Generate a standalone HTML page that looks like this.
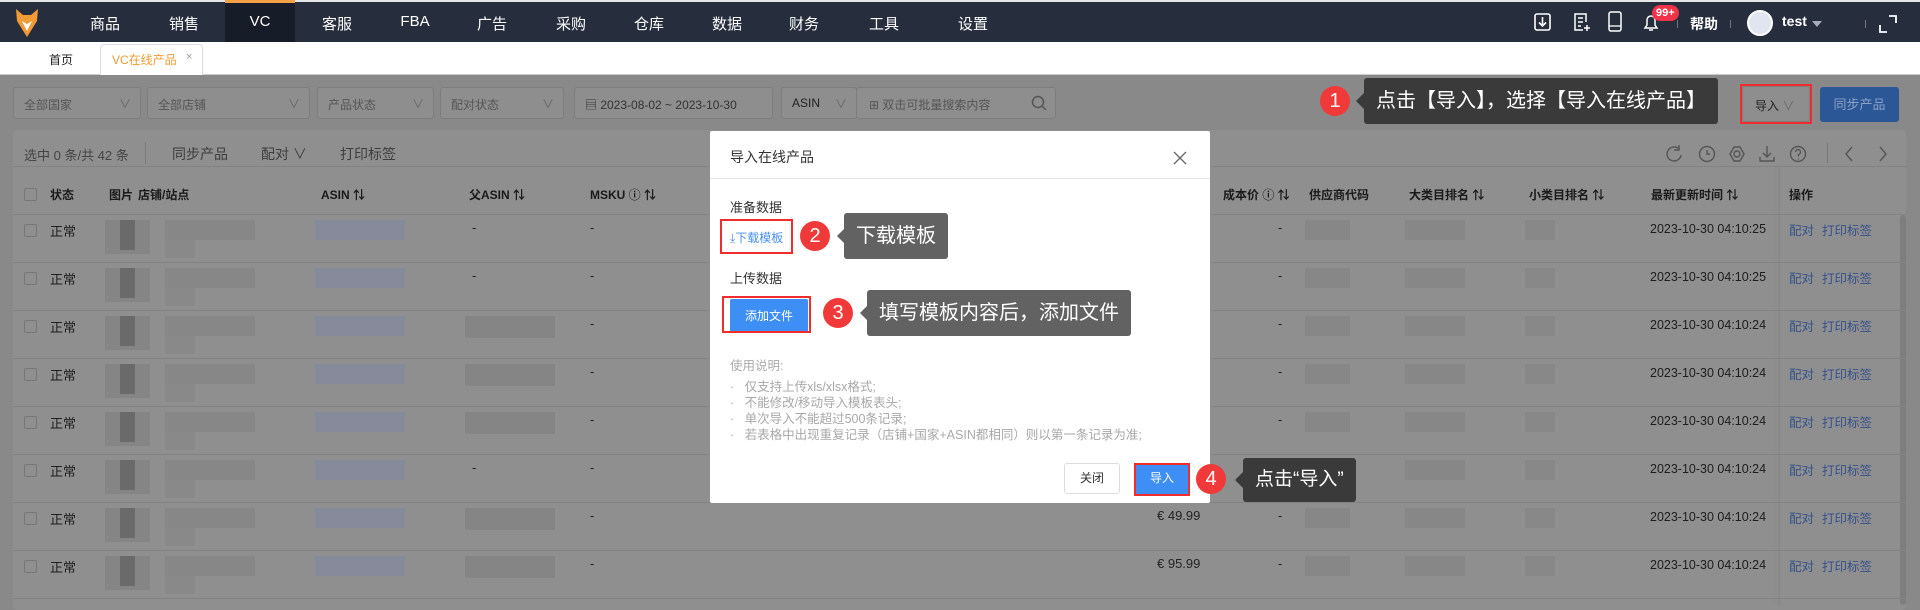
<!DOCTYPE html>
<html><head><meta charset="utf-8"><style>
*{margin:0;padding:0;box-sizing:border-box}
body{width:1920px;height:605px;overflow:hidden;position:relative;background:#898989;font-family:"Liberation Sans","Noto Sans CJK SC",sans-serif;font-size:13px;color:#222}
.a{position:absolute}
.nav{left:0;top:0;width:1920px;height:42px;background:#262e3e;border-top:2px solid #e6e6e6}
.ni{position:absolute;top:11px;color:#fff;font-size:15px;transform:translateX(-50%)}
.tabs{left:0;top:42px;width:1920px;height:33px;background:#fff;border-bottom:1px solid #ccc}
.inp{position:absolute;top:87px;height:32px;border:1px solid #7d7d7d;border-radius:3px;background:#8e8e8e;color:#555;font-size:12px;padding:8px 10px}
.inp i{position:absolute;right:9px;top:7px;font-style:normal;color:#666}
.card{left:13px;top:130px;width:1893px;height:480px;background:#8f8f8f;border-radius:4px}
.hl{position:absolute;left:13px;width:1893px;height:1px;background:#838383}
.th{position:absolute;top:186px;font-weight:bold;font-size:12px;color:#1a1a1a}
.cb{position:absolute;left:24px;width:13px;height:13px;border:1px solid #777;border-radius:2px}
.bl{position:absolute;background:#7d7d7d}
.dt{position:absolute;left:1650px;font-size:12.5px;color:#1d1d1d}
.op{position:absolute;color:#34528a;font-size:12.5px}
.modal{left:710px;top:131px;width:500px;height:372px;background:#fff;border-radius:2px}
.circ{position:absolute;width:30px;height:30px;border-radius:50%;background:#f03a3a;color:#fff;font-size:20px;text-align:center;line-height:30px}
.tip{position:absolute;color:#fff;font-size:20px;padding:0 12px;border-radius:3px;white-space:nowrap}
.rb{position:absolute;border:2px solid #f02c2c}
.li{position:absolute;left:730px;font-size:12.5px;color:#a8a8a8;white-space:nowrap}
</style></head><body>
<div class="a nav">
<svg class="a" style="left:16px;top:7px" width="22" height="28" viewBox="0 0 22 28"><path d="M0 0 L7 6 L15 6 L22 0 L21 12 L11 28 L1 12Z" fill="#f29a36"/><path d="M6 12 L11 22 L16 12 L11 15Z" fill="#fff"/></svg>
<div class="a" style="left:225px;top:-2px;width:70px;height:42px;background:#161c28;border-top:3px solid #f4a046"></div>
<span class="ni" style="left:105px">商品</span><span class="ni" style="left:184px">销售</span><span class="ni" style="left:260px">VC</span><span class="ni" style="left:337px">客服</span><span class="ni" style="left:415px">FBA</span><span class="ni" style="left:492px">广告</span><span class="ni" style="left:571px">采购</span><span class="ni" style="left:649px">仓库</span><span class="ni" style="left:727px">数据</span><span class="ni" style="left:804px">财务</span><span class="ni" style="left:884px">工具</span><span class="ni" style="left:973px">设置</span>
<svg class="a" style="left:1534px;top:10px" width="18" height="20"><rect x="1" y="2" width="15" height="16" rx="2" fill="none" stroke="#fff" stroke-width="1.6"/><path d="M8.5 5v9M5 10.5l3.5 3.5 3.5-3.5" fill="none" stroke="#fff" stroke-width="1.6"/></svg>
<svg class="a" style="left:1573px;top:10px" width="18" height="22"><path d="M13 10V2H2v16h8" fill="none" stroke="#fff" stroke-width="1.5"/><path d="M5 6h5M5 10h5M5 14h3M14 13v6M11 16h6" stroke="#fff" stroke-width="1.5"/></svg>
<svg class="a" style="left:1608px;top:9px" width="14" height="22"><rect x="1" y="1" width="12" height="19" rx="2" fill="none" stroke="#fff" stroke-width="1.5"/><path d="M1 15h12" stroke="#fff" stroke-width="1.3"/></svg>
<svg class="a" style="left:1643px;top:10px" width="16" height="22"><path d="M2 16h12l-2-3V8a4 4 0 0 0-8 0v5z" fill="none" stroke="#fff" stroke-width="1.5"/><path d="M6 18h4" stroke="#fff" stroke-width="1.5"/></svg>
<div class="a" style="left:1652px;top:3px;padding:0 4px;height:16px;border-radius:8px;background:#f0324a;color:#fff;font-size:11px;line-height:16px;font-weight:bold">99+</div>
<div class="a" style="left:1677px;top:18px;width:1px;height:8px;background:#777"></div>
<span class="a" style="left:1690px;top:12px;color:#fff;font-size:14px;font-weight:bold">帮助</span>
<div class="a" style="left:1730px;top:18px;width:1px;height:8px;background:#777"></div>
<div class="a" style="left:1747px;top:8px;width:26px;height:26px;border-radius:50%;background:#dfe6f0;border:2px solid #fff"></div>
<span class="a" style="left:1782px;top:11px;color:#fff;font-size:14px;font-weight:bold">test</span>
<div class="a" style="left:1812px;top:19px;border:5px solid transparent;border-top:6px solid #aab;border-bottom:0"></div>
<div class="a" style="left:1865px;top:18px;width:1px;height:8px;background:#777"></div>
<svg class="a" style="left:1879px;top:13px" width="18" height="18"><path d="M10 1h7v7M1 10v7h7" fill="none" stroke="#fff" stroke-width="1.8"/></svg>
</div>
<div class="a tabs">
<span class="a" style="left:49px;top:9px;font-size:12px;color:#222">首页</span>
<div class="a" style="left:100px;top:2px;width:103px;height:31px;border:1px solid #ddd;border-bottom:0;border-radius:4px 4px 0 0;background:#fff"></div>
<span class="a" style="left:112px;top:9px;font-size:12px;color:#f29a36">VC在线产品</span><span class="a" style="left:186px;top:9px;font-size:11px;color:#999">×</span>
</div>
<div class="inp" style="left:13px;width:128px">全部国家<i>∨</i></div>
<div class="inp" style="left:147px;width:163px">全部店铺<i>∨</i></div>
<div class="inp" style="left:317px;width:117px">产品状态<i>∨</i></div>
<div class="inp" style="left:440px;width:124px">配对状态<i>∨</i></div>
<div class="inp" style="left:574px;width:199px;padding-left:10px;color:#333">▤ 2023-08-02 ~ 2023-10-30</div>
<div class="inp" style="left:781px;width:76px;color:#222">ASIN<i>∨</i></div>
<div class="inp" style="left:856px;width:200px;padding-left:12px">⊞ 双击可批量搜索内容
<svg class="a" style="right:8px;top:7px" width="16" height="16"><circle cx="7" cy="7" r="5.5" fill="none" stroke="#555" stroke-width="1.5"/><path d="M11 11l4 4" stroke="#555" stroke-width="1.5"/></svg></div>
<div class="a" style="left:1356px;top:93px;border:8px solid transparent;border-left:0;border-right-color:#3a3a3a"></div>
<div class="tip" style="left:1364px;top:78px;height:46px;line-height:46px;background:#3a3a3a">点击【导入】，选择【导入在线产品】</div>
<div class="circ" style="left:1320px;top:86px">1</div>
<div class="a" style="left:1742px;top:86px;width:68px;height:36px;background:#8e8e8e;border:1px solid #7d7d7d;border-radius:3px;font-size:12px;padding:10px 12px">导入 <span style="color:#666">∨</span></div>
<div class="rb" style="left:1740px;top:84px;width:72px;height:40px"></div>
<div class="a" style="left:1820px;top:87px;width:79px;height:35px;background:#2b5797;border-radius:3px;color:#8aa2c6;font-size:13px;text-align:center;line-height:35px">同步产品</div>
<div class="a card"></div>
<span class="a" style="left:24px;top:145px;font-size:13px;color:#444">选中 0 条/共 42 条</span>
<div class="a" style="left:145px;top:142px;width:1px;height:22px;background:#7a7a7a"></div>
<span class="a" style="left:172px;top:144px;font-size:14px;color:#3d3d3d">同步产品</span>
<span class="a" style="left:261px;top:144px;font-size:14px;color:#3d3d3d">配对 ∨</span>
<span class="a" style="left:340px;top:144px;font-size:14px;color:#3d3d3d">打印标签</span>
<svg class="a" style="left:1664px;top:143px" width="150" height="22" fill="none" stroke="#555" stroke-width="1.4">
<path d="M15 6A7 7 0 1 0 17 12"/><path d="M15 2v5h-5"/>
<circle cx="43" cy="11" r="7.5"/><path d="M43 7v4h3"/>
<path d="M70 4h6l4 7-4 7h-6l-4-7z"/><circle cx="73" cy="11" r="3"/>
<path d="M103 3v11M99 10l4 4 4-4M96 14v4h14v-4"/>
<circle cx="134" cy="11" r="7.5"/><path d="M131.5 9a2.5 2.5 0 1 1 3 2.5v2M134.5 15.5v1"/>
</svg>
<div class="a" style="left:1827px;top:143px;width:1px;height:20px;background:#777"></div>
<svg class="a" style="left:1842px;top:145px" width="50" height="18" fill="none" stroke="#555" stroke-width="1.4"><path d="M10 2l-6 7 6 7M38 2l6 7-6 7"/></svg>
<div class="hl" style="top:166px"></div>
<div class="cb" style="top:188px"></div>
<span class="th" style="left:50px">状态</span><span class="th" style="left:109px">图片</span><span class="th" style="left:138px">店铺/站点</span><span class="th" style="left:321px">ASIN ⇅</span><span class="th" style="left:469px">父ASIN ⇅</span><span class="th" style="left:590px">MSKU ⓘ ⇅</span><span class="th" style="left:1223px">成本价 ⓘ ⇅</span><span class="th" style="left:1309px">供应商代码</span><span class="th" style="left:1409px">大类目排名 ⇅</span><span class="th" style="left:1529px">小类目排名 ⇅</span><span class="th" style="left:1651px">最新更新时间 ⇅</span><span class="th" style="left:1789px">操作</span>
<div class="a" style="left:1779px;top:166px;width:1px;height:440px;background:#878787;box-shadow:-3px 0 5px rgba(0,0,0,.08)"></div>
<div class="a" style="left:1900px;top:215px;width:6px;height:390px;background:#7e7e7e;border-radius:3px"></div>
<div class="hl" style="top:214px"></div><div class="hl" style="top:262px"></div><div class="hl" style="top:310px"></div><div class="hl" style="top:358px"></div><div class="hl" style="top:406px"></div><div class="hl" style="top:454px"></div><div class="hl" style="top:502px"></div><div class="hl" style="top:550px"></div><div class="hl" style="top:598px"></div>
<div id="rows"></div>
<script>
var tops=[214,262,310,358,406,454,502,550],h='';
var sec=['25','25','24','24','24','24','24','24'];
tops.forEach(function(t,i){
h+='<div class="cb" style="top:'+(t+10)+'px"></div>';
h+='<span class="a" style="left:50px;top:'+(t+7)+'px;font-size:13px;color:#1e1e1e">正常</span>';
h+='<div class="bl" style="left:105px;top:'+(t+6)+'px;width:45px;height:34px;background:#858585"></div>';
h+='<div class="bl" style="left:120px;top:'+(t+6)+'px;width:15px;height:30px;background:#6a6a6a"></div>';
h+='<div class="bl" style="left:165px;top:'+(t+6)+'px;width:90px;height:20px;background:#878787"></div>';
h+='<div class="bl" style="left:165px;top:'+(t+26)+'px;width:30px;height:18px;background:#898989"></div>';
h+='<div class="bl" style="left:315px;top:'+(t+6)+'px;width:90px;height:20px;background:#868a9a"></div>';
if(i==2||i==3||i==4||i==6||i==7)h+='<div class="bl" style="left:465px;top:'+(t+6)+'px;width:90px;height:22px;background:#858585"></div>';
else h+='<span class="a" style="left:472px;top:'+(t+6)+'px">-</span>';
h+='<span class="a" style="left:590px;top:'+(t+6)+'px">-</span>';
h+='<span class="a" style="left:1278px;top:'+(t+6)+'px">-</span>';
h+='<div class="bl" style="left:1305px;top:'+(t+6)+'px;width:45px;height:20px;background:#878787"></div>';
h+='<div class="bl" style="left:1405px;top:'+(t+6)+'px;width:60px;height:20px;background:#878787"></div>';
h+='<div class="bl" style="left:1525px;top:'+(t+6)+'px;width:30px;height:20px;background:#888"></div>';
h+='<span class="dt" style="top:'+(t+8)+'px">2023-10-30 04:10:'+sec[i]+'</span>';
h+='<span class="op" style="left:1789px;top:'+(t+6)+'px">配对</span><span class="op" style="left:1822px;top:'+(t+6)+'px">打印标签</span>';
if(i==6)h+='<span class="a" style="left:1157px;top:'+(t+6)+'px">€ 49.99</span>';
if(i==7)h+='<span class="a" style="left:1157px;top:'+(t+6)+'px">€ 95.99</span>';
});
document.getElementById('rows').innerHTML=h;
</script>

<div class="a modal">
<span class="a" style="left:20px;top:16px;font-size:14px;color:#333">导入在线产品</span>
<svg class="a" style="left:463px;top:20px" width="14" height="14"><path d="M1 1l12 12M13 1L1 13" stroke="#666" stroke-width="1.3"/></svg>
<div class="a" style="left:0;top:47px;width:500px;height:1px;background:#e5e5e5"></div>
<span class="a" style="left:20px;top:66px;font-size:13px;color:#333">准备数据</span>
<span class="a" style="left:20px;top:98px;font-size:12px;color:#4a8ef0">⤓下载模板</span>
<span class="a" style="left:20px;top:137px;font-size:13px;color:#333">上传数据</span>
<div class="a" style="left:20px;top:168px;width:78px;height:34px;background:#3d8ef5;border-radius:2px;color:#fff;font-size:12px;text-align:center;line-height:34px">添加文件</div>
<span class="a" style="left:20px;top:224px;font-size:12.5px;color:#aaa">使用说明:</span>
<div class="a" style="left:354px;top:332px;width:56px;height:31px;border:1px solid #ddd;border-radius:3px;font-size:12px;text-align:center;line-height:29px;color:#333">关闭</div>
<div class="a" style="left:425px;top:332px;width:54px;height:31px;background:#3d8ef5;border-radius:2px;font-size:12px;text-align:center;line-height:31px;color:#fff">导入</div>
</div>
<span class="li" style="top:376px">·&nbsp;&nbsp; 仅支持上传xls/xlsx格式;</span>
<span class="li" style="top:392px">·&nbsp;&nbsp; 不能修改/移动导入模板表头;</span>
<span class="li" style="top:408px">·&nbsp;&nbsp; 单次导入不能超过500条记录;</span>
<span class="li" style="top:424px">·&nbsp;&nbsp; 若表格中出现重复记录（店铺+国家+ASIN都相同）则以第一条记录为准;</span>
<div class="rb" style="left:720px;top:219px;width:73px;height:35px"></div>
<div class="rb" style="left:722px;top:296px;width:89px;height:37px"></div>
<div class="rb" style="left:1134px;top:463px;width:56px;height:33px"></div>
<div class="circ" style="left:800px;top:221px">2</div>
<div class="circ" style="left:823px;top:298px">3</div>
<div class="circ" style="left:1196px;top:464px">4</div>
<div class="a" style="left:837px;top:228px;border:8px solid transparent;border-left:0;border-right-color:#626262"></div>
<div class="tip" style="left:844px;top:213px;height:46px;line-height:46px;background:#626262">下载模板</div>
<div class="a" style="left:860px;top:305px;border:8px solid transparent;border-left:0;border-right-color:#626262"></div>
<div class="tip" style="left:867px;top:290px;height:46px;line-height:46px;background:#626262">填写模板内容后，添加文件</div>
<div class="a" style="left:1235px;top:472px;border:8px solid transparent;border-left:0;border-right-color:#3a3a3a"></div>
<div class="tip" style="left:1243px;top:458px;height:44px;line-height:44px;background:#3a3a3a;font-size:19px">点击“导入”</div>
</body></html>
